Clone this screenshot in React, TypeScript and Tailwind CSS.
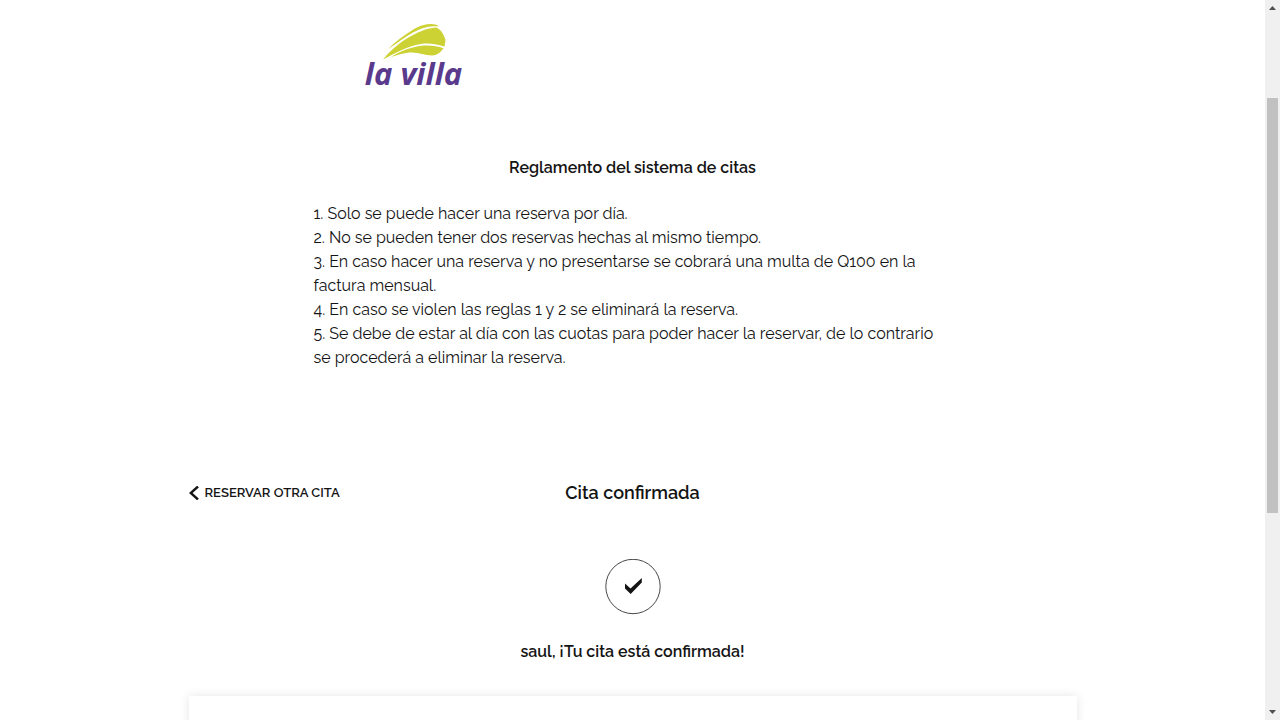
const rules: string[] = [
  "1. Solo se puede hacer una reserva por día.",
  "2. No se pueden tener dos reservas hechas al mismo tiempo.",
  "3. En caso hacer una reserva y no presentarse se cobrará una multa de Q100 en la factura mensual.",
  "4. En caso se violen las reglas 1 y 2 se eliminará la reserva.",
  "5. Se debe de estar al día con las cuotas para poder hacer la reservar, de lo contrario se procederá a eliminar la reserva.",
];

function Logo() {
  return (
    <a href="#inicio" className="flex w-24 flex-col items-center text-[#5a3a8c]">
      <svg viewBox="0 0 64 36" className="h-9 w-16" fill="#cdd234" aria-hidden="true">
        <path d="M6 25C14 17 28 7 35 3.500C42 0 52 -1.500 57 2.500C46 1 38 5 31 8.500C23 13 14 20 6 25Z" />
        <path d="M1 35.500C7 28 16 20 24 15C34 9 44 4 54 3.500C59 5 62 11 63.500 16L62.500 22.500C54 20 46 19 39 20C25 22 13 29.500 1 35.500Z" />
        <path d="M9 33C19 27 29 23 40 21.800C47 21 55 22 61.500 24.300C59 28 56 31 50 31.500C43 31.500 37 28.500 30 28.500C22 28.500 16 31 9 33Z" />
      </svg>
      <span className="pt-px font-['Open_Sans',sans-serif] text-[31px] leading-6 font-bold whitespace-nowrap italic">
        la villa
      </span>
    </a>
  );
}

function ScrollRail() {
  return (
    <div className="flex w-[15px] shrink-0 flex-col items-center bg-[#f0f0f0]" aria-hidden="true">
      <svg viewBox="0 0 15 15" className="size-[15px]" fill="#505050">
        <path d="M4 10L7.5 6L11 10Z" />
      </svg>
      <div className="grow-[83]" />
      <div className="w-[11px] grow-[415] bg-[#c1c1c1]" />
      <div className="grow-[192]" />
      <svg viewBox="0 0 15 15" className="size-[15px]" fill="#505050">
        <path d="M4 5L7.5 9L11 5Z" />
      </svg>
    </div>
  );
}

export default function App() {
  return (
    <div className="flex h-screen overflow-hidden bg-white font-[Raleway,Lato,sans-serif] text-[#141414]">
      <div className="min-w-0 flex-1 overflow-hidden">
        <header className="mx-auto max-w-[534px] pt-6">
          <Logo />
        </header>

        <section className="mx-auto max-w-[638px] pt-[71px]">
          <h2 className="text-center text-base font-semibold">Reglamento del sistema de citas</h2>
          <div className="pt-[22px] text-base">
            {rules.map((rule) => (
              <p key={rule}>{rule}</p>
            ))}
          </div>
        </section>

        <main className="mx-auto max-w-[888px] pt-[109px]">
          <div className="grid grid-cols-3 items-center">
            <button type="button" className="flex items-center gap-1.5 text-[13px] font-semibold uppercase">
              <svg viewBox="0 0 10 14" className="h-3.5 w-2.5" fill="none" stroke="currentColor" strokeWidth="2.4" aria-hidden="true">
                <path d="M9 0.500L1.700 7L9 13.500" />
              </svg>
              Reservar otra cita
            </button>
            <h1 className="text-center text-lg leading-7 font-semibold">Cita confirmada</h1>
          </div>
          <div className="flex flex-col items-center gap-[25px] pt-[52px]">
            <svg viewBox="0 0 56 56" className="size-14" aria-hidden="true">
              <circle cx="28" cy="27.5" r="27.2" fill="none" stroke="#333" strokeWidth="0.9" />
              <path d="M20 24.500L25.500 29.500L36.800 19V23.500L25.700 35L20 29.500Z" fill="#141414" />
            </svg>
            <p className="text-base font-semibold">saul, ¡Tu cita está confirmada!</p>
          </div>
          <div className="mt-8 h-80 bg-white shadow-[0_0_10px_rgba(0,0,0,0.1)]" />
        </main>
      </div>
      <ScrollRail />
    </div>
  );
}
